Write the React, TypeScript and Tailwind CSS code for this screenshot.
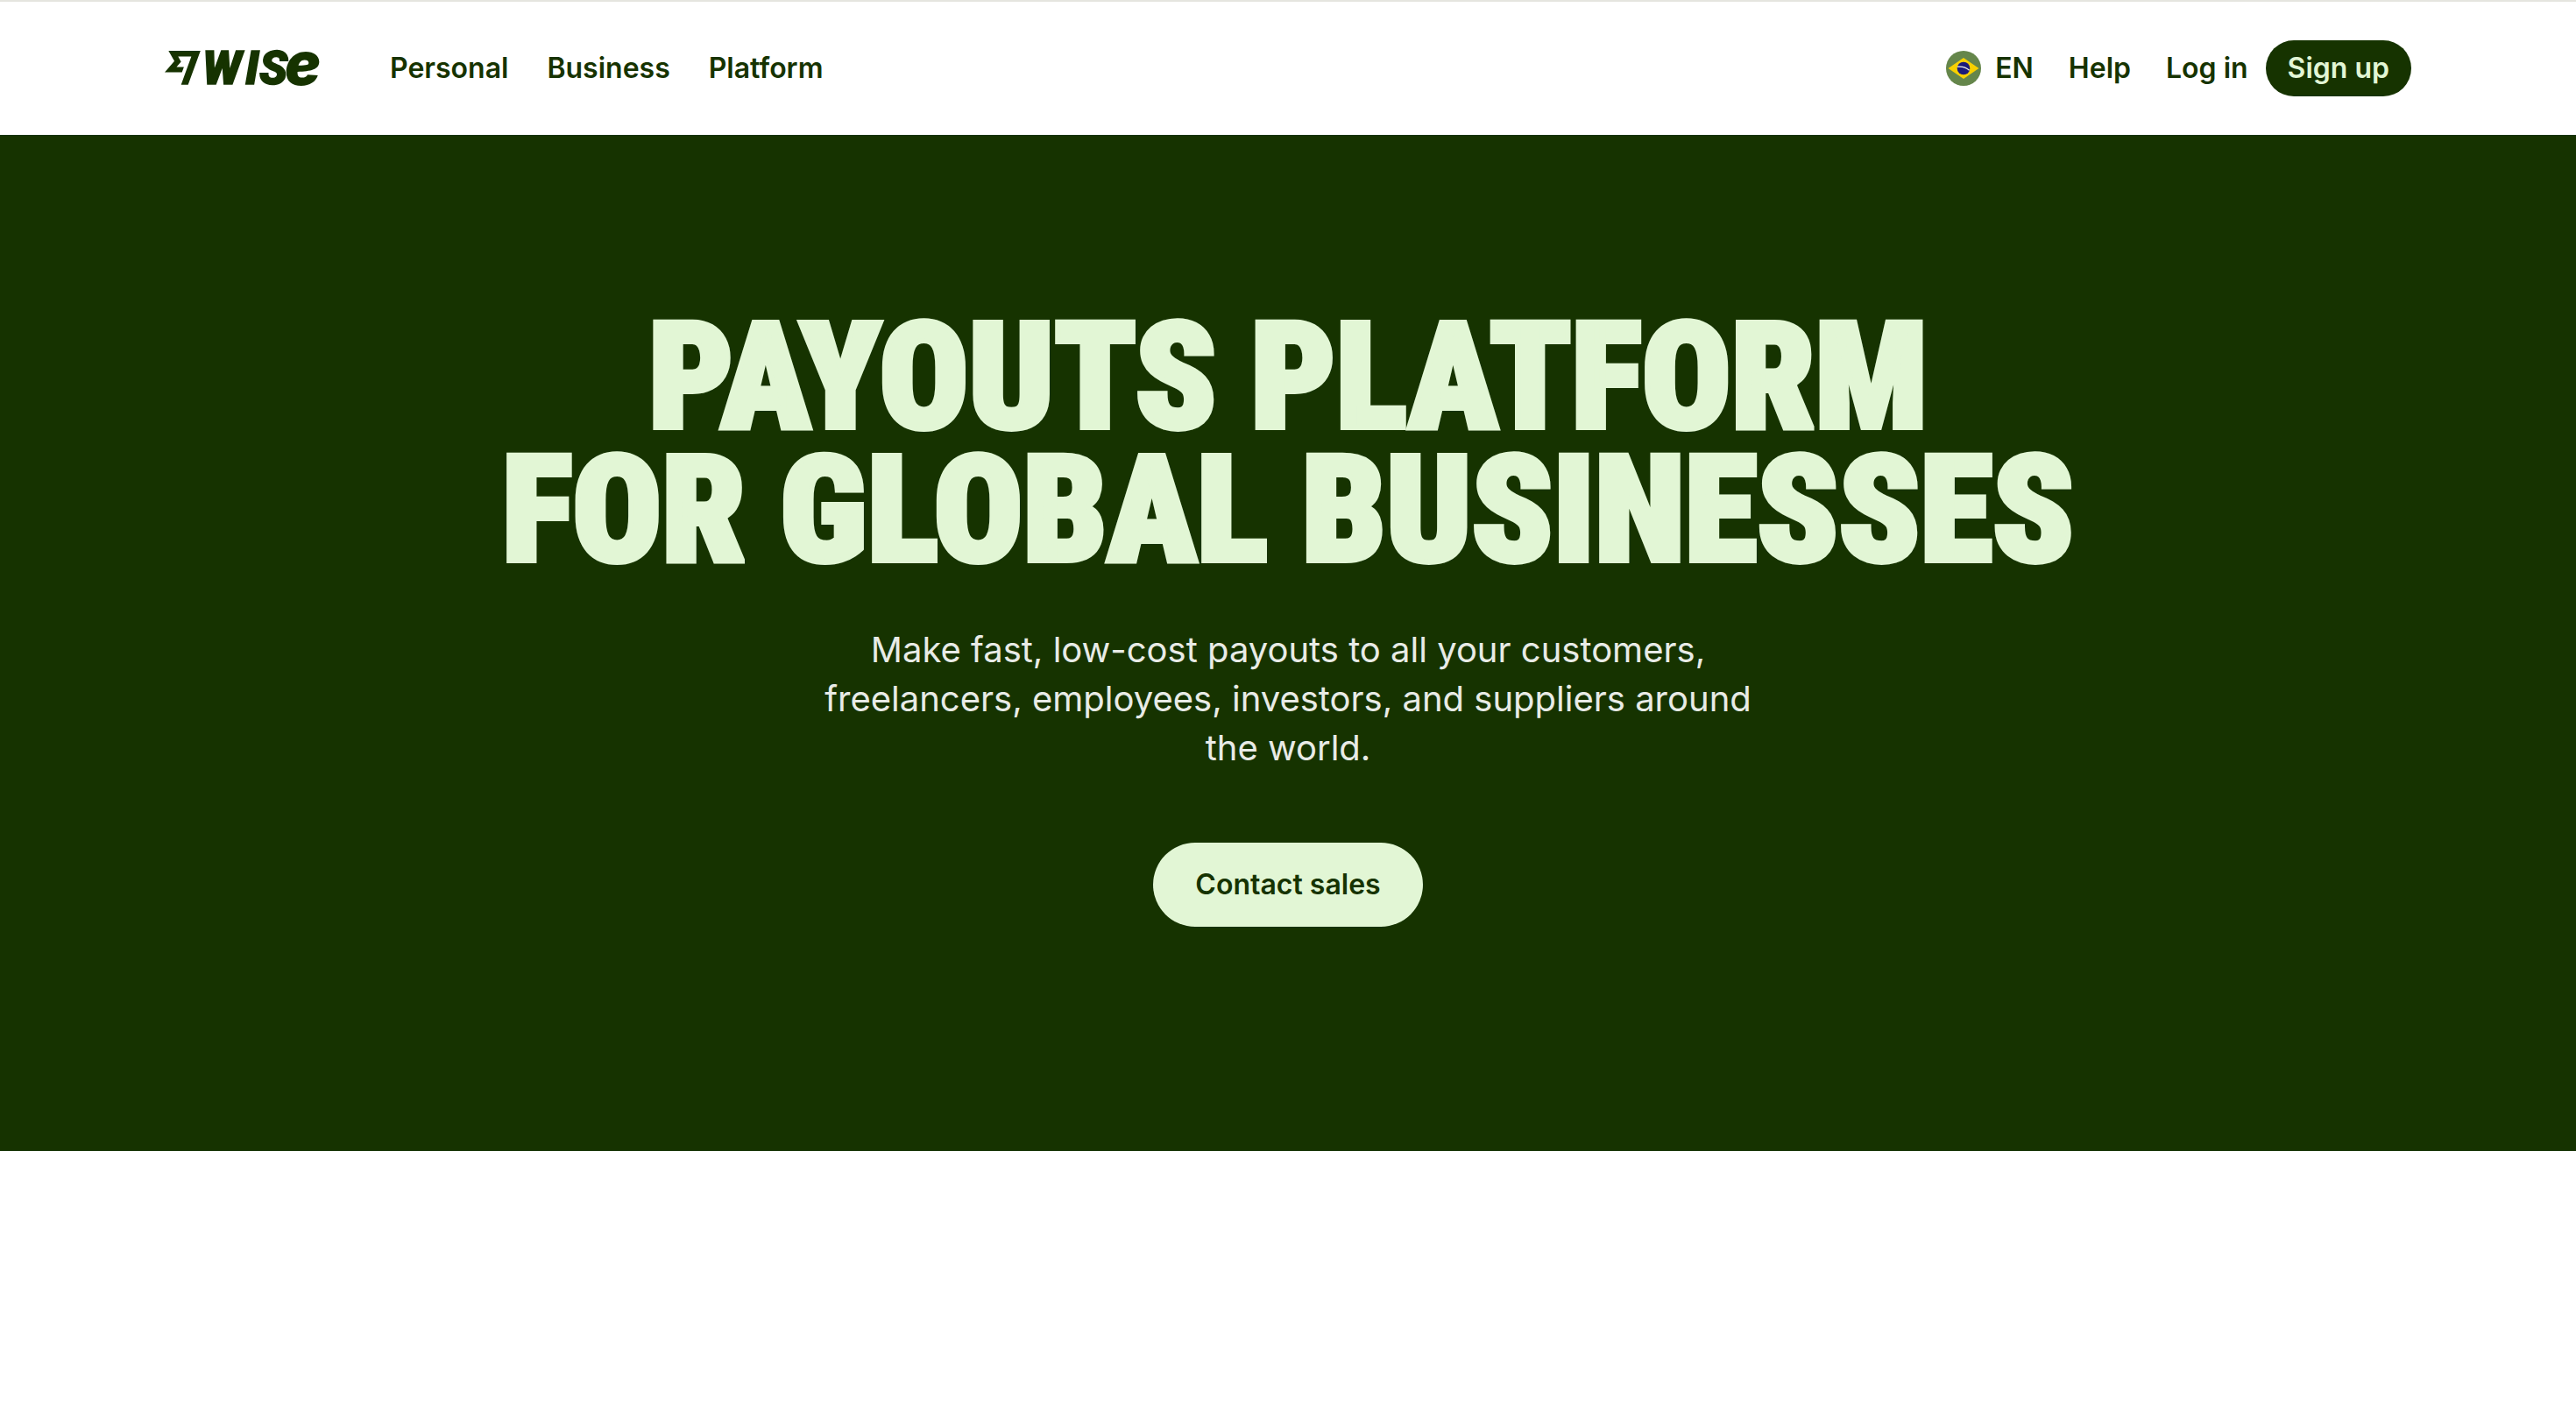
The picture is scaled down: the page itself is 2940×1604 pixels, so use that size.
const navLinks = ['Personal', 'Business', 'Platform'];

function WiseLogo() {
  return (
    <svg
      className="overflow-visible"
      width="177"
      height="40"
      viewBox="0 0 177 40"
      fill="currentColor"
      role="img"
      aria-label="Wise"
    >
      <path
        transform="scale(1.7) translate(0 -0.595)"
        d="M6.488 7.469 0 15.05h11.585l1.301-3.576H7.922l3.033-3.507.01-.092L8.993 4.48h8.873l-6.878 18.925h4.706L24 .595H2.543l3.945 6.874Z"
      />
      <g fontFamily="Roboto, sans-serif" fontWeight="900" fontStyle="italic" fontSize="53">
        <g stroke="currentColor" strokeWidth="1.5">
          <text x="43" y="38">W</text>
          <text x="92" y="38">I</text>
          <text x="108" y="38">S</text>
        </g>
        <text x="137" y="39" fontFamily="Inter, sans-serif" fontSize="68">e</text>
      </g>
    </svg>
  );
}

function BrazilFlag() {
  return (
    <svg className="size-10" viewBox="0 0 40 40" aria-hidden="true">
      <circle cx="20" cy="20" r="20" fill="#65864b" />
      <path d="M20 8 37.5 20 20 32 2.5 20Z" fill="#f7d000" />
      <circle cx="20" cy="20" r="7.3" fill="#1b1b7b" />
      <path d="M13 18.2c5-.6 10 .7 13.6 4" fill="none" stroke="#f3f5e8" strokeWidth="1.2" />
    </svg>
  );
}

export default function App() {
  return (
    <div className="min-h-screen bg-white font-['Inter',sans-serif] text-[#163300]">
      {/* Header */}
      <header className="border-t-2 border-[#e5e5df] px-47">
        <div className="flex h-38 items-center justify-between text-[32px] leading-10 font-semibold">
          <div className="flex items-center gap-20">
            <a href="#">
              <WiseLogo />
            </a>
            <nav className="flex items-center gap-11">
              {navLinks.map((label) => (
                <a key={label} href="#">
                  {label}
                </a>
              ))}
            </nav>
          </div>

          <div className="flex items-center gap-5">
            <div className="flex items-center gap-10">
              <button type="button" className="flex items-center gap-4">
                <BrazilFlag />
                EN
              </button>
              <a href="#">Help</a>
              <a href="#">Log in</a>
            </div>
            <a href="#" className="rounded-full bg-[#163300] px-[25px] py-3 text-[#e2f6d5]">
              Sign up
            </a>
          </div>
        </div>
      </header>

      {/* Hero */}
      <section className="flex flex-col items-center bg-[#163300] px-47 pt-50 pb-64 text-center">
        <h1 className="font-['Roboto_Condensed','Roboto',sans-serif] text-[169px] leading-[152px] font-black text-[#e2f6d5] uppercase [-webkit-text-stroke:6px_#e2f6d5]">
          Payouts platform
          <br />
          for global businesses
        </h1>
        <p className="mt-14 max-w-[1100px] text-[40px] leading-14 text-[#e8ebe6]">
          Make fast, low-cost payouts to all your customers, freelancers, employees, investors, and
          suppliers around the world.
        </p>
        <a
          href="#"
          className="mt-20 rounded-full bg-[#e2f6d5] px-12 py-7 text-[32px] leading-10 font-semibold"
        >
          Contact sales
        </a>
      </section>
    </div>
  );
}
